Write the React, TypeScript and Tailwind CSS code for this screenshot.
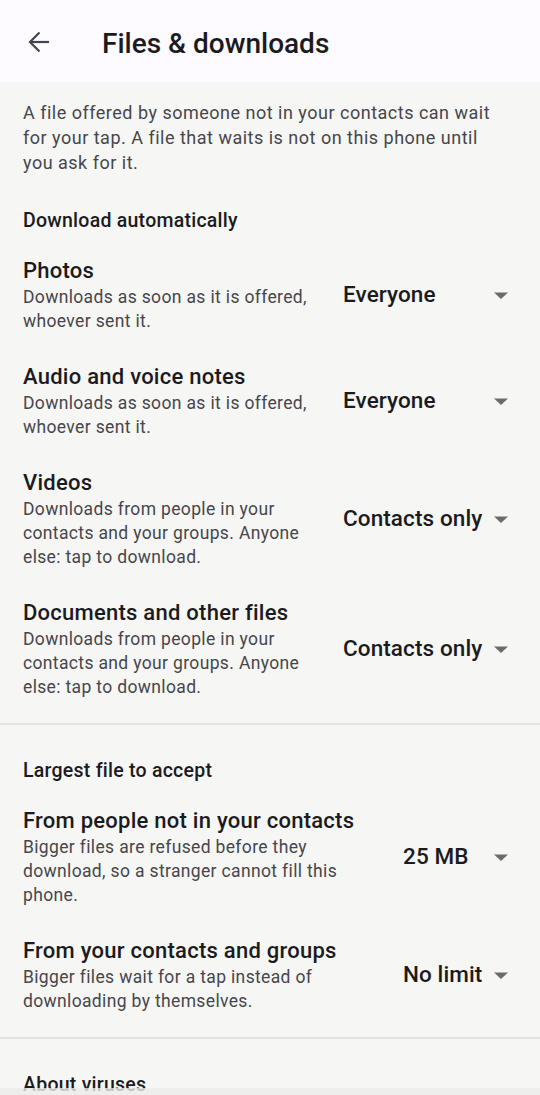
import React from 'react';

type Row = { title: string; subtitle: string; value: string };

const autoRows: Row[] = [
  { title: 'Photos', subtitle: 'Downloads as soon as it is offered, whoever sent it.', value: 'Everyone' },
  { title: 'Audio and voice notes', subtitle: 'Downloads as soon as it is offered, whoever sent it.', value: 'Everyone' },
  { title: 'Videos', subtitle: 'Downloads from people in your contacts and your groups. Anyone else: tap to download.', value: 'Contacts only' },
  { title: 'Documents and other files', subtitle: 'Downloads from people in your contacts and your groups. Anyone else: tap to download.', value: 'Contacts only' },
];

const sizeRows: Row[] = [
  { title: 'From people not in your contacts', subtitle: 'Bigger files are refused before they download, so a stranger cannot fill this phone.', value: '25 MB' },
  { title: 'From your contacts and groups', subtitle: 'Bigger files wait for a tap instead of downloading by themselves.', value: 'No limit' },
];

function Caret() {
  return (
    <svg width="24" height="24" viewBox="0 0 24 24" className="shrink-0">
      <path d="M5 9.5l7 6.5 7-6.5z" fill="#6b6b6e" />
    </svg>
  );
}

function SettingRow({ row, dropWidth, subWidth }: { row: Row; dropWidth: string; subWidth: string }) {
  return (
    <div className="flex items-center pl-[23px] pr-[27px] py-[15px]">
      <div className="flex-1 min-w-0">
        <div className="text-[22px] leading-[28px] font-medium text-[#1b1b1f] tracking-[0.25px] whitespace-nowrap">{row.title}</div>
        <div className={`text-[17.5px] leading-[24px] text-[#46464c] tracking-[0.35px] ${subWidth}`}>{row.subtitle}</div>
      </div>
      <div className={`flex items-center justify-between shrink-0 ${dropWidth}`}>
        <span className="text-[22.5px] font-medium text-[#1b1b1f] tracking-[0.1px]">{row.value}</span>
        <Caret />
      </div>
    </div>
  );
}

function SectionHeader({ children }: { children: React.ReactNode }) {
  return (
    <div className="pl-[23px] pt-[34px] pb-[9px] text-[19.5px] leading-[24px] font-medium text-[#1b1b1f] tracking-[0.25px]">
      {children}
    </div>
  );
}

export default function App() {
  return (
    <div className="h-[1095px] overflow-hidden bg-[#f6f6f4] relative" style={{ fontFamily: 'Roboto, "Noto Sans", sans-serif' }}>
      {/* Top app bar */}
      <div className="h-[82px] bg-[#fdfbff] flex items-center">
        <button className="ml-[28px] w-[22px] h-[22px] flex items-center justify-center mt-[2px]">
          <svg width="22" height="22" viewBox="0 0 22 22" fill="none" stroke="#44464f" strokeWidth="2.2">
            <path d="M2 11H21" />
            <path d="M11.5 1.5L2 11l9.5 9.5" />
          </svg>
        </button>
        <h1 className="ml-[52px] text-[28px] font-medium text-[#1b1b1f] mt-[5px]">Files &amp; downloads</h1>
      </div>

      {/* Intro */}
      <p className="pl-[23px] pr-[36px] pt-[18px] text-[18px] leading-[25px] text-[#46464c] tracking-[0.5px]">
        A file offered by someone not in your contacts can wait for your tap. A file that waits is not on this phone until you ask for it.
      </p>

      <SectionHeader>Download automatically</SectionHeader>
      <div className="pb-[9px]">
        {autoRows.map((r) => (
          <SettingRow key={r.title} row={r} dropWidth="w-[170px]" subWidth="max-w-[300px]" />
        ))}
      </div>
      <div className="h-[2px] bg-[#e2e2e6]" />

      <SectionHeader>Largest file to accept</SectionHeader>
      <div className="pb-[9px]">
        {sizeRows.map((r) => (
          <SettingRow key={r.title} row={r} dropWidth="w-[110px]" subWidth="max-w-[320px]" />
        ))}
      </div>
      <div className="h-[2px] bg-[#e2e2e6]" />

      <SectionHeader>About viruses</SectionHeader>

      {/* system nav bar shading */}
      <div className="absolute left-0 right-0 bottom-0 h-[7px] bg-[#ececea]/80" />
    </div>
  );
}
